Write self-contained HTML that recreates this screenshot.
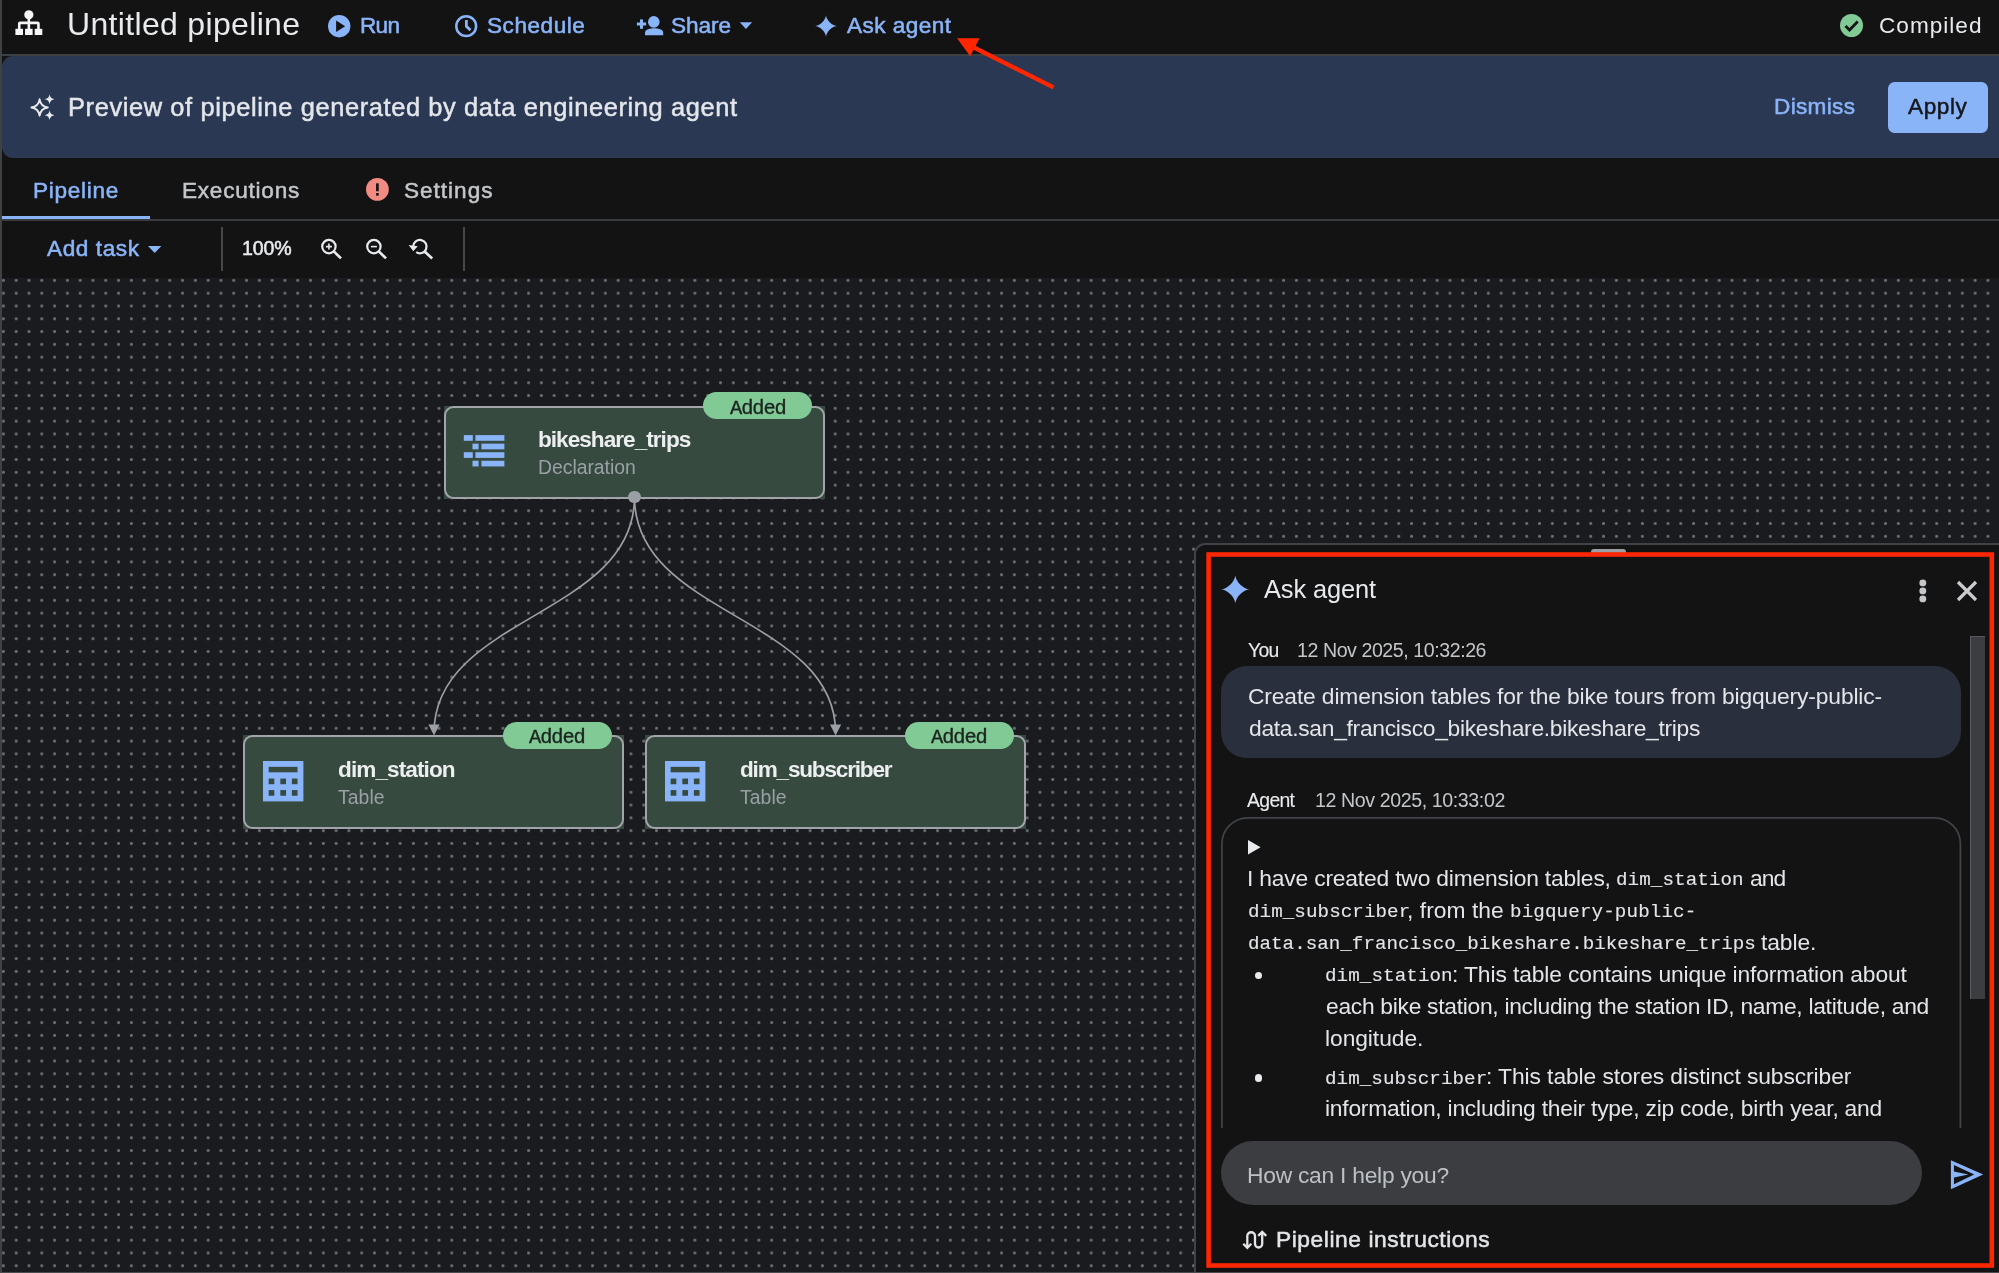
<!DOCTYPE html><html lang="en"><head><meta charset="utf-8"><title>Untitled pipeline</title><style>
*{box-sizing:border-box;margin:0;padding:0}
html,body{width:1999px;height:1273px;overflow:hidden;background:#131314}
body{position:relative;font-family:"Liberation Sans",Arial,sans-serif;color:#e8eaed}
.a{position:absolute}
.t{position:absolute;white-space:pre;display:block;will-change:transform}
svg{position:absolute;overflow:visible}
#canvas{left:2px;top:277.6px;width:1997px;height:994px;background:#1a1b1f;overflow:hidden}
.dots{position:absolute;top:277.6px;height:994px;background-image:radial-gradient(circle at 50% 50%,#6c6e73 0,#6c6e73 1.1px,rgba(108,110,115,0) 1.9px);background-size:12.796875px 12.796875px;background-position:0 -4.0px}
.node{position:absolute;background:#364a3f;width:381px;height:93px}
.node:before{content:"";position:absolute;inset:0;border:2px solid #a1a5aa;border-radius:9.5px}
.badge{position:absolute;background:#81c995;border-radius:13.45px;width:109px;height:26.9px}
</style></head><body>
<header>
<div class="a" style="left:0;top:0;width:1999px;height:54.5px;background:#131314"></div>
<div class="a" style="left:0;top:54.4px;width:1999px;height:1.8px;background:#3c4043"></div>
<svg style="left:0;top:0" width="1999" height="1273"><g fill="#f4f5f6"><circle cx="28.85" cy="14.8" r="4.6"/><rect x="27.55" y="18" width="2.6" height="11.5"/><path d="M17.95 29.5 V23.6 A2.1 2.1 0 0 1 20.05 21.5 H37.65 A2.1 2.1 0 0 1 39.75 23.6 V29.5 H37.15 V24.2 H20.55 V29.5Z"/><rect x="15.4" y="28.8" width="7.6" height="6.2"/><rect x="25.05" y="28.8" width="7.6" height="6.2"/><rect x="34.7" y="28.8" width="7.6" height="6.2"/></g></svg>
<h1 class="t" style="left:66.80px;top:2.90px;font:400 32px/42px 'Liberation Sans', Arial, sans-serif;color:#e8eaed;letter-spacing:0.331px;">Untitled pipeline</h1>
<svg style="left:327.9px;top:14.9px" width="22.4" height="22.4" viewBox="0 0 24 24"><circle cx="12" cy="12" r="12" fill="#8ab4f8"/><path d="M8.7 5.9 L18.4 12 L8.7 18.1Z" fill="#131314"/></svg>
<span class="t" style="left:359.90px;top:10.80px;font:400 22.6px/29px 'Liberation Sans', Arial, sans-serif;color:#8ab4f8;letter-spacing:-0.741px;-webkit-text-stroke:0.55px #8ab4f8;">Run</span>
<svg style="left:454.5px;top:14.9px" width="22.4" height="22.4" viewBox="0 0 24 24"><circle cx="12" cy="12" r="10.6" fill="none" stroke="#8ab4f8" stroke-width="2.7"/><path d="M12.2 5.4 V12.2 L16.6 16.2" fill="none" stroke="#8ab4f8" stroke-width="3"/></svg>
<span class="t" style="left:486.70px;top:10.80px;font:400 22.6px/29px 'Liberation Sans', Arial, sans-serif;color:#8ab4f8;letter-spacing:0.522px;-webkit-text-stroke:0.55px #8ab4f8;">Schedule</span>
<svg style="left:0;top:0" width="1999" height="1273"><g fill="#8ab4f8"><circle cx="653.8" cy="21.9" r="5.8"/><path d="M645 35.2 V32.6 C645 29.4 650.4 28.2 654.1 28.2 C657.8 28.2 663.2 29.4 663.2 32.6 V35.2Z"/><rect x="636.9" y="22.5" width="9.2" height="3"/><rect x="640" y="19.4" width="3" height="9.4"/></g></svg>
<span class="t" style="left:670.80px;top:10.80px;font:400 22.6px/29px 'Liberation Sans', Arial, sans-serif;color:#8ab4f8;letter-spacing:-0.031px;-webkit-text-stroke:0.55px #8ab4f8;">Share</span>
<svg style="left:0;top:0" width="1999" height="1273"><path d="M739.8 22.3H752.1L745.95 28.9Z" fill="#8ab4f8"/></svg>
<svg style="left:814.7px;top:14.75px" width="22" height="22" viewBox="0 0 24 24"><path d="M24.00 12.00 L23.68 12.02 L22.77 12.18 L21.37 12.60 L19.66 13.38 L17.82 14.54 L16.06 16.06 L14.54 17.82 L13.38 19.66 L12.60 21.37 L12.18 22.77 L12.02 23.68 L12.00 24.00 L11.98 23.68 L11.82 22.77 L11.40 21.37 L10.62 19.66 L9.46 17.82 L7.94 16.06 L6.18 14.54 L4.34 13.38 L2.63 12.60 L1.23 12.18 L0.32 12.02 L0.00 12.00 L0.32 11.98 L1.23 11.82 L2.63 11.40 L4.34 10.62 L6.18 9.46 L7.94 7.94 L9.46 6.18 L10.62 4.34 L11.40 2.63 L11.82 1.23 L11.98 0.32 L12.00 0.00 L12.02 0.32 L12.18 1.23 L12.60 2.63 L13.38 4.34 L14.54 6.18 L16.06 7.94 L17.82 9.46 L19.66 10.62 L21.37 11.40 L22.77 11.82 L23.68 11.98Z" fill="#8ab4f8"/></svg>
<span class="t" style="left:847.10px;top:10.80px;font:400 22.6px/29px 'Liberation Sans', Arial, sans-serif;color:#8ab4f8;letter-spacing:0.437px;-webkit-text-stroke:0.55px #8ab4f8;">Ask agent</span>
<svg style="left:1840.2px;top:14.2px" width="23" height="23" viewBox="0 0 24 24"><circle cx="12" cy="12" r="12" fill="#81c995"/><path d="M5.7 12.5 L10 16.7 L18.5 7.9" fill="none" stroke="#131314" stroke-width="2.9"/></svg>
<span class="t" style="left:1878.50px;top:10.80px;font:400 22.6px/29px 'Liberation Sans', Arial, sans-serif;color:#e8eaed;letter-spacing:1.004px;">Compiled</span>
</header>
<section>
<div class="a" style="left:2px;top:56px;width:1999px;height:102px;background:#2a3853;border-radius:11px 0 0 11px"></div>
<svg style="left:0;top:0" width="1999" height="1273"><path d="M39.60 99.30 C40.42 104.52 42.58 106.68 47.80 107.50 C42.58 108.32 40.42 110.48 39.60 115.70 C38.78 110.48 36.62 108.32 31.40 107.50 C36.62 106.68 38.78 104.52 39.60 99.30Z" fill="none" stroke="#e8eaed" stroke-width="1.9" stroke-linejoin="round"/><path d="M49.60 94.35 C50.09 97.47 51.38 98.76 54.50 99.25 C51.38 99.74 50.09 101.03 49.60 104.15 C49.11 101.03 47.82 99.74 44.70 99.25 C47.82 98.76 49.11 97.47 49.60 94.35Z M49.60 110.30 C50.09 113.42 51.38 114.71 54.50 115.20 C51.38 115.69 50.09 116.98 49.60 120.10 C49.11 116.98 47.82 115.69 44.70 115.20 C47.82 114.71 49.11 113.42 49.60 110.30Z" fill="#e8eaed"/></svg>
<p class="t" style="left:67.60px;top:90.50px;font:400 25.4px/33px 'Liberation Sans', Arial, sans-serif;color:#e3e6ea;letter-spacing:0.626px;-webkit-text-stroke:0.5px #e3e6ea;">Preview of pipeline generated by data engineering agent</p>
<span class="t" style="left:1774.30px;top:92.30px;font:400 22.6px/29px 'Liberation Sans', Arial, sans-serif;color:#8ab4f8;letter-spacing:0.322px;-webkit-text-stroke:0.55px #8ab4f8;">Dismiss</span>
<div class="a" style="left:1887.7px;top:81.7px;width:100px;height:51.3px;background:#8ab4f8;border-radius:6.5px"></div>
<span class="t" style="left:1908.00px;top:92.30px;font:400 22.6px/29px 'Liberation Sans', Arial, sans-serif;color:#15171c;letter-spacing:0.595px;-webkit-text-stroke:0.5px #15171c;">Apply</span>
</section>
<nav>
<span class="t" style="left:32.80px;top:176.10px;font:400 22.6px/29px 'Liberation Sans', Arial, sans-serif;color:#8ab4f8;letter-spacing:0.711px;-webkit-text-stroke:0.55px #8ab4f8;">Pipeline</span>
<span class="t" style="left:181.60px;top:176.10px;font:400 22.6px/29px 'Liberation Sans', Arial, sans-serif;color:#c4c7c9;letter-spacing:0.753px;-webkit-text-stroke:0.5px #c4c7c9;">Executions</span>
<svg style="left:366.3px;top:178.1px" width="22.8" height="22.8" viewBox="0 0 24 24"><circle cx="12" cy="12" r="12" fill="#f28b82"/><rect x="10.6" y="5.6" width="2.8" height="8.4" fill="#131314"/><rect x="10.6" y="15.8" width="2.8" height="2.8" fill="#131314"/></svg>
<span class="t" style="left:404.30px;top:176.10px;font:400 22.6px/29px 'Liberation Sans', Arial, sans-serif;color:#c4c7c9;letter-spacing:0.980px;-webkit-text-stroke:0.5px #c4c7c9;">Settings</span>
<div class="a" style="left:2px;top:218.9px;width:1997px;height:2.1px;background:#393c3f"></div>
<div class="a" style="left:2px;top:215.8px;width:148px;height:3.6px;background:#8ab4f8"></div>
</nav>
<div>
<span class="t" style="left:47.30px;top:234.10px;font:400 22.6px/29px 'Liberation Sans', Arial, sans-serif;color:#8ab4f8;letter-spacing:0.583px;-webkit-text-stroke:0.55px #8ab4f8;">Add task</span>
<svg style="left:147.8px;top:245.8px" width="13.4" height="7" viewBox="0 0 10 5.2"><path d="M0 0H10L5 5.2Z" fill="#8ab4f8"/></svg>
<div class="a" style="left:220.8px;top:226.8px;width:2px;height:44.4px;background:#45484b"></div>
<div class="a" style="left:463.2px;top:226.8px;width:2px;height:44.4px;background:#45484b"></div>
<span class="t" style="left:242.20px;top:235.90px;font:400 19.6px/25px 'Liberation Sans', Arial, sans-serif;color:#e8eaed;letter-spacing:-0.164px;-webkit-text-stroke:0.5px #e8eaed;">100%</span>
<svg style="left:320.9px;top:238px" width="21" height="21" viewBox="0 0 21 21"><circle cx="7.9" cy="8.6" r="6.7" fill="none" stroke="#e8eaed" stroke-width="2.2"/><path d="M12.8 13.4 L20 20.4" stroke="#e8eaed" stroke-width="2.7" fill="none"/><path d="M4.9 8.6H10.9M7.9 5.6V11.6" stroke="#e8eaed" stroke-width="1.6" fill="none"/></svg>
<svg style="left:365.6px;top:238px" width="21" height="21" viewBox="0 0 21 21"><circle cx="7.9" cy="8.6" r="6.7" fill="none" stroke="#e8eaed" stroke-width="2.2"/><path d="M12.8 13.4 L20 20.4" stroke="#e8eaed" stroke-width="2.7" fill="none"/><path d="M4.9 8.6H10.9" stroke="#e8eaed" stroke-width="1.6" fill="none"/></svg>
<svg style="left:0;top:0" width="1999" height="1273"><path d="M413.2 246.4 A6.7 6.7 0 1 1 416.2 252.2" fill="none" stroke="#e8eaed" stroke-width="2.2"/><path d="M424.6 251.4 L432.2 258.6" stroke="#e8eaed" stroke-width="2.7" fill="none"/><path d="M408.6 245 L417.7 246.2 L413.3 251.3Z" fill="#e8eaed"/></svg>
</div>
<main>
<div id="canvas" class="a"></div>
<div class="dots" style="left:-3.200px;width:409.500px"></div>
<div class="dots" style="left:406.528px;width:409.500px"></div>
<div class="dots" style="left:816.256px;width:409.500px"></div>
<div class="dots" style="left:1225.984px;width:409.500px"></div>
<div class="dots" style="left:1635.712px;width:400.000px"></div>
<svg style="left:0;top:0" width="1999" height="1273"><g fill="none" stroke="#9aa0a6" stroke-width="1.7"><path d="M634.5 497 C634.5 616 434 616 434 733"/><path d="M634.5 497 C634.5 616 835.6 616 835.6 733"/></g><g fill="#9aa0a6"><path d="M428.4 724.4 H439.6 L434 735.6Z"/><path d="M830 724.4 H841.2 L835.6 735.6Z"/></g></svg>
<article><div class="node" style="left:444.2px;top:405.9px;height:93px"></div><svg style="left:0;top:0" width="1999" height="1273"><g fill="#8ab4f8"><rect x="463.80" y="435.10" width="9" height="5.7"/><rect x="475.40" y="435.10" width="29" height="5.7"/><rect x="472.50" y="443.65" width="6.1" height="5.7"/><rect x="481.40" y="443.65" width="23" height="5.7"/><rect x="463.80" y="452.20" width="9" height="5.7"/><rect x="475.40" y="452.20" width="29" height="5.7"/><rect x="472.50" y="460.75" width="6.1" height="5.7"/><rect x="481.40" y="460.75" width="23" height="5.7"/></g></svg><h2 class="t" style="left:538.10px;top:425.30px;font:700 22.6px/29px 'Liberation Sans', Arial, sans-serif;color:#eceef0;letter-spacing:-0.983px;">bikeshare_trips</h2><span class="t" style="left:538.10px;top:455.00px;font:400 19.4px/25px 'Liberation Sans', Arial, sans-serif;color:#9aa0a6;letter-spacing:-0.030px;">Declaration</span><div class="badge" style="left:703.4px;top:392.2px"></div><span class="t" style="left:729.90px;top:394.90px;font:400 20.4px/27px 'Liberation Mono', 'DejaVu Sans Mono', monospace;color:#1b241e;letter-spacing:-1.111px;-webkit-text-stroke:0.35px #1b241e;">Added</span></article>
<div class="a" style="left:628.1px;top:490.6px;width:12.8px;height:12.8px;border-radius:50%;background:#9aa0a6"></div>
<article><div class="node" style="left:243.3px;top:735.4px;height:93.5px"></div><svg style="left:263.4px;top:761.4px" width="40.4" height="40.4" viewBox="0 0 40 40"><rect width="40" height="40" fill="#8ab4f8"/><g fill="#364a3f"><rect x="5.6" y="5.8" width="28.6" height="5.4"/><rect x="5.6" y="17.4" width="5.6" height="5.6"/><rect x="17.2" y="17.4" width="5.6" height="5.6"/><rect x="28.6" y="17.4" width="5.6" height="5.6"/><rect x="5.6" y="28.8" width="5.6" height="5.6"/><rect x="17.2" y="28.8" width="5.6" height="5.6"/><rect x="28.6" y="28.8" width="5.6" height="5.6"/></g></svg><h2 class="t" style="left:338.20px;top:754.80px;font:700 22.6px/29px 'Liberation Sans', Arial, sans-serif;color:#eceef0;letter-spacing:-0.919px;">dim_station</h2><span class="t" style="left:338.20px;top:784.50px;font:400 19.4px/25px 'Liberation Sans', Arial, sans-serif;color:#9aa0a6;letter-spacing:0.057px;">Table</span><div class="badge" style="left:502.5px;top:721.7px"></div><span class="t" style="left:529.00px;top:724.40px;font:400 20.4px/27px 'Liberation Mono', 'DejaVu Sans Mono', monospace;color:#1b241e;letter-spacing:-1.111px;-webkit-text-stroke:0.35px #1b241e;">Added</span></article>
<article><div class="node" style="left:645.3px;top:735.4px;height:93.5px"></div><svg style="left:665.4px;top:761.4px" width="40.4" height="40.4" viewBox="0 0 40 40"><rect width="40" height="40" fill="#8ab4f8"/><g fill="#364a3f"><rect x="5.6" y="5.8" width="28.6" height="5.4"/><rect x="5.6" y="17.4" width="5.6" height="5.6"/><rect x="17.2" y="17.4" width="5.6" height="5.6"/><rect x="28.6" y="17.4" width="5.6" height="5.6"/><rect x="5.6" y="28.8" width="5.6" height="5.6"/><rect x="17.2" y="28.8" width="5.6" height="5.6"/><rect x="28.6" y="28.8" width="5.6" height="5.6"/></g></svg><h2 class="t" style="left:740.20px;top:754.80px;font:700 22.6px/29px 'Liberation Sans', Arial, sans-serif;color:#eceef0;letter-spacing:-1.205px;">dim_subscriber</h2><span class="t" style="left:740.20px;top:784.50px;font:400 19.4px/25px 'Liberation Sans', Arial, sans-serif;color:#9aa0a6;letter-spacing:0.057px;">Table</span><div class="badge" style="left:904.5px;top:721.7px"></div><span class="t" style="left:931.00px;top:724.40px;font:400 20.4px/27px 'Liberation Mono', 'DejaVu Sans Mono', monospace;color:#1b241e;letter-spacing:-1.111px;-webkit-text-stroke:0.35px #1b241e;">Added</span></article>
</main>
<aside>
<div class="a" style="left:1194.4px;top:542.6px;width:810px;height:735px;background:#131314;border:2px solid #3f4246;border-radius:11px 0 0 0"></div>
<div class="a" style="left:1590.8px;top:549.3px;width:35.3px;height:6px;background:#9aa0a6;border-radius:3px"></div>
<svg style="left:1221.3px;top:574.5px" width="28.6" height="28.8" viewBox="0 0 24 24"><path d="M24.00 12.00 L23.68 12.02 L22.77 12.18 L21.37 12.60 L19.66 13.38 L17.82 14.54 L16.06 16.06 L14.54 17.82 L13.38 19.66 L12.60 21.37 L12.18 22.77 L12.02 23.68 L12.00 24.00 L11.98 23.68 L11.82 22.77 L11.40 21.37 L10.62 19.66 L9.46 17.82 L7.94 16.06 L6.18 14.54 L4.34 13.38 L2.63 12.60 L1.23 12.18 L0.32 12.02 L0.00 12.00 L0.32 11.98 L1.23 11.82 L2.63 11.40 L4.34 10.62 L6.18 9.46 L7.94 7.94 L9.46 6.18 L10.62 4.34 L11.40 2.63 L11.82 1.23 L11.98 0.32 L12.00 0.00 L12.02 0.32 L12.18 1.23 L12.60 2.63 L13.38 4.34 L14.54 6.18 L16.06 7.94 L17.82 9.46 L19.66 10.62 L21.37 11.40 L22.77 11.82 L23.68 11.98Z" fill="#8ab4f8"/></svg>
<h2 class="t" style="left:1263.60px;top:573.10px;font:400 25.4px/33px 'Liberation Sans', Arial, sans-serif;color:#e8eaed;letter-spacing:-0.108px;">Ask agent</h2>
<svg style="left:1918.6px;top:578.6px" width="7.6" height="24" viewBox="0 0 7.6 24"><g fill="#c4c7c9"><circle cx="3.8" cy="3.9" r="3.45"/><circle cx="3.8" cy="11.9" r="3.45"/><circle cx="3.8" cy="19.9" r="3.45"/></g></svg>
<svg style="left:1957px;top:580.6px" width="20" height="20" viewBox="0 0 20 20"><path d="M1 1L19 19M19 1L1 19" stroke="#c9cbce" stroke-width="3.2" fill="none"/></svg>
<div class="a" style="left:1970.3px;top:635.6px;width:14.4px;height:363px;background:#3c3d41;border-left:1px solid #5a5c60;border-top:1px solid #55575b"></div>
<span class="t" style="left:1248.00px;top:638.00px;font:400 19.4px/25px 'Liberation Sans', Arial, sans-serif;color:#e8eaed;letter-spacing:-0.668px;-webkit-text-stroke:0.12px #e8eaed;">You</span>
<span class="t" style="left:1297.00px;top:638.00px;font:400 19.6px/25px 'Liberation Sans', Arial, sans-serif;color:#c4c7c9;letter-spacing:-0.439px;">12 Nov 2025, 10:32:26</span>
<div class="a" style="left:1221px;top:665.6px;width:1739.7px;max-width:739.7px;height:92.7px;background:#292f3d;border-radius:26px"></div>
<p class="t" style="left:1248.00px;top:680.60px;font:400 22.8px/30px 'Liberation Sans', Arial, sans-serif;color:#e3e5e8;letter-spacing:-0.131px;">Create dimension tables for the bike tours from bigquery-public-</p>
<p class="t" style="left:1249.00px;top:712.60px;font:400 22.8px/30px 'Liberation Sans', Arial, sans-serif;color:#e3e5e8;letter-spacing:-0.289px;">data.san_francisco_bikeshare.bikeshare_trips</p>
<span class="t" style="left:1247.40px;top:788.30px;font:400 19.4px/25px 'Liberation Sans', Arial, sans-serif;color:#e8eaed;letter-spacing:-0.671px;-webkit-text-stroke:0.12px #e8eaed;">Agent</span>
<span class="t" style="left:1315.00px;top:788.30px;font:400 19.6px/25px 'Liberation Sans', Arial, sans-serif;color:#c4c7c9;letter-spacing:-0.399px;">12 Nov 2025, 10:33:02</span>
<svg style="left:0;top:0" width="1999" height="1273"><path d="M1221.9 1128 V843.8 A26 26 0 0 1 1247.9 817.8 H1934.4 A26 26 0 0 1 1960.4 843.8 V1128" fill="none" stroke="#414448" stroke-width="1.7"/></svg>
<svg style="left:1248.4px;top:839.6px" width="12.6" height="14.4" viewBox="0 0 12.6 14.4"><path d="M0 0L12.6 7.2L0 14.4Z" fill="#e8eaed"/></svg>
<span class="t" style="left:1247.40px;top:862.80px;font:400 22.8px/30px 'Liberation Sans', Arial, sans-serif;color:#e3e5e8;letter-spacing:-0.174px;">I have created two dimension tables,</span>
<code class="t" style="left:1616.00px;top:868.30px;font:400 19.2px/25px 'Liberation Mono', 'DejaVu Sans Mono', monospace;color:#e3e5e8;letter-spacing:0.098px;-webkit-text-stroke:0.12px #e3e5e8;">dim_station</code>
<span class="t" style="left:1749.60px;top:862.80px;font:400 22.8px/30px 'Liberation Sans', Arial, sans-serif;color:#e3e5e8;letter-spacing:-0.979px;">and</span>
<code class="t" style="left:1248.40px;top:900.30px;font:400 19.2px/25px 'Liberation Mono', 'DejaVu Sans Mono', monospace;color:#e3e5e8;letter-spacing:0.076px;-webkit-text-stroke:0.12px #e3e5e8;">dim_subscriber</code>
<span class="t" style="left:1407.00px;top:894.80px;font:400 22.8px/30px 'Liberation Sans', Arial, sans-serif;color:#e3e5e8;letter-spacing:0.044px;">, from the</span>
<code class="t" style="left:1510.00px;top:900.30px;font:400 19.2px/25px 'Liberation Mono', 'DejaVu Sans Mono', monospace;color:#e3e5e8;letter-spacing:0.134px;-webkit-text-stroke:0.12px #e3e5e8;">bigquery-public-</code>
<code class="t" style="left:1248.40px;top:932.30px;font:400 19.2px/25px 'Liberation Mono', 'DejaVu Sans Mono', monospace;color:#e3e5e8;letter-spacing:0.027px;-webkit-text-stroke:0.12px #e3e5e8;">data.san_francisco_bikeshare.bikeshare_trips</code>
<span class="t" style="left:1761.00px;top:926.80px;font:400 22.8px/30px 'Liberation Sans', Arial, sans-serif;color:#e3e5e8;letter-spacing:-0.087px;">table.</span>
<div class="a" style="left:1254.6px;top:971.6px;width:7.6px;height:7.6px;border-radius:50%;background:#e8eaed"></div>
<code class="t" style="left:1325.00px;top:964.30px;font:400 19.2px/25px 'Liberation Mono', 'DejaVu Sans Mono', monospace;color:#e3e5e8;letter-spacing:0.098px;-webkit-text-stroke:0.12px #e3e5e8;">dim_station</code>
<span class="t" style="left:1451.60px;top:958.80px;font:400 22.8px/30px 'Liberation Sans', Arial, sans-serif;color:#e3e5e8;letter-spacing:-0.104px;">: This table contains unique information about</span>
<span class="t" style="left:1326.00px;top:990.80px;font:400 22.8px/30px 'Liberation Sans', Arial, sans-serif;color:#e3e5e8;letter-spacing:-0.281px;">each bike station, including the station ID, name, latitude, and</span>
<span class="t" style="left:1325.00px;top:1022.80px;font:400 22.8px/30px 'Liberation Sans', Arial, sans-serif;color:#e3e5e8;letter-spacing:-0.059px;">longitude.</span>
<div class="a" style="left:1254.6px;top:1074.2px;width:7.6px;height:7.6px;border-radius:50%;background:#e8eaed"></div>
<code class="t" style="left:1325.00px;top:1066.50px;font:400 19.2px/25px 'Liberation Mono', 'DejaVu Sans Mono', monospace;color:#e3e5e8;letter-spacing:0.076px;-webkit-text-stroke:0.12px #e3e5e8;">dim_subscriber</code>
<span class="t" style="left:1486.10px;top:1061.00px;font:400 22.8px/30px 'Liberation Sans', Arial, sans-serif;color:#e3e5e8;letter-spacing:-0.076px;">: This table stores distinct subscriber</span>
<span class="t" style="left:1325.00px;top:1093.00px;font:400 22.8px/30px 'Liberation Sans', Arial, sans-serif;color:#e3e5e8;letter-spacing:-0.221px;">information, including their type, zip code, birth year, and</span>
<div class="a" style="left:1221px;top:1141.3px;width:700.8px;height:64px;background:#3c3d41;border-radius:32px"></div>
<span class="t" style="left:1246.50px;top:1160.10px;font:400 22.8px/30px 'Liberation Sans', Arial, sans-serif;color:#bdc1c6;letter-spacing:-0.244px;">How can I help you?</span>
<svg style="left:0;top:0" width="1999" height="1273"><path fill-rule="evenodd" fill="#8ab4f8" d="M1950.9 1160.2 L1983.2 1174.6 L1950.9 1189.3Z M1953.95 1165.1 L1974.2 1174.6 L1953.95 1184.2 L1953.95 1177.5 L1968.3 1174.6 L1953.95 1171.4Z"/></svg>
<svg style="left:0;top:0" width="1999" height="1273"><g fill="none" stroke="#e3e5e8" stroke-width="2.3"><path d="M1247.3 1247.4 V1236.1 A3.85 3.85 0 0 1 1255 1236.1 V1243.9 A3.6 3.6 0 0 0 1262.2 1243.9 V1232.4"/><path d="M1243.3 1243.8 L1247.3 1247.8 L1251.3 1243.8"/><path d="M1258.2 1235.9 L1262.2 1231.9 L1266.2 1235.9"/></g></svg>
<span class="t" style="left:1276.10px;top:1224.20px;font:400 22.8px/30px 'Liberation Sans', Arial, sans-serif;color:#e3e5e8;letter-spacing:0.548px;-webkit-text-stroke:0.5px #e3e5e8;">Pipeline instructions</span>
</aside>
<div class="a" style="left:0;top:0;width:1.8px;height:1273px;background:#3f4245"></div>
<div class="a" style="left:0;top:1271.5px;width:1999px;height:1.5px;background:#4a4d50"></div>
<svg style="left:0;top:0" width="1999" height="1273"><rect x="1208.6" y="554.5" width="783.2" height="711" fill="none" stroke="#ff2600" stroke-width="4.6"/></svg>
<svg style="left:0;top:0" width="1999" height="1273"><path d="M971 46 L1053.5 87.4" stroke="#ff2600" stroke-width="4.3" fill="none"/><path d="M957 38.3 L979.5 38.3 L970.2 56.2Z" fill="#ff2600"/></svg>
</body></html>
